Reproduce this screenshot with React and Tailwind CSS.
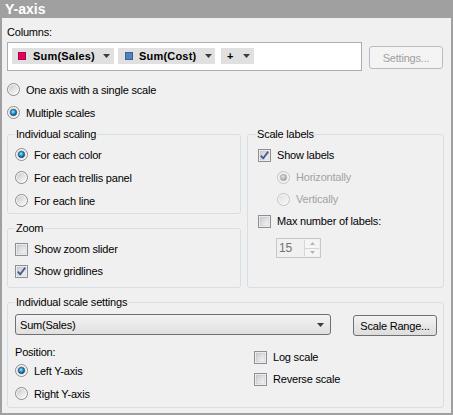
import React from "react";

function Radio({ checked, disabled }) {
  return (
    <svg width="13" height="13" viewBox="0 0 13 13" className="shrink-0">
      <defs>
        <linearGradient id="rIn" x1="0" y1="0" x2="1" y2="1">
          <stop offset="0" stopColor="#c9c9c9" />
          <stop offset="1" stopColor="#fbfbfb" />
        </linearGradient>
        <linearGradient id="rInD" x1="0" y1="0" x2="1" y2="1">
          <stop offset="0" stopColor="#e2e2e2" />
          <stop offset="1" stopColor="#f7f7f7" />
        </linearGradient>
        <radialGradient id="rDot" cx="0.42" cy="0.38" r="0.62">
          <stop offset="0" stopColor="#a8ecff" />
          <stop offset="0.45" stopColor="#2d9fdc" />
          <stop offset="1" stopColor="#0b4a7c" />
        </radialGradient>
        <radialGradient id="rDotD" cx="0.42" cy="0.38" r="0.62">
          <stop offset="0" stopColor="#e6e6e6" />
          <stop offset="1" stopColor="#9a9a9a" />
        </radialGradient>
      </defs>
      <circle cx="6.5" cy="6.5" r="6" fill={disabled ? "#f5f5f5" : "#f8f8f8"} stroke={disabled ? "#c2c2c2" : "#8a8a8a"} />
      <circle cx="6.5" cy="6.5" r="4.6" fill={disabled ? "url(#rInD)" : "url(#rIn)"} />
      {checked && (
        <circle cx="6.5" cy="6.5" r="3.2" fill={disabled ? "url(#rDotD)" : "url(#rDot)"} stroke={disabled ? "#b0b0b0" : "#1d3f5c"} strokeWidth="0.6" />
      )}
    </svg>
  );
}

function Check({ checked }) {
  return (
    <svg width="13" height="13" viewBox="0 0 13 13" className="shrink-0">
      <defs>
        <linearGradient id="cIn" x1="0" y1="0" x2="1" y2="1">
          <stop offset="0" stopColor="#c8cbd0" />
          <stop offset="1" stopColor="#f7f7f7" />
        </linearGradient>
      </defs>
      <rect x="0.5" y="0.5" width="12" height="12" fill="#fbfbfb" stroke="#8e8f8f" />
      <rect x="2" y="2" width="9" height="9" fill="url(#cIn)" stroke="#b5b8bc" strokeWidth="0.5" />
      {checked && (
        <path d="M2.8 6.6 L5.2 9.4 L10.2 2.6" fill="none" stroke="#4a5b96" strokeWidth="1.8" strokeLinejoin="round" />
      )}
    </svg>
  );
}

function Tri() {
  return (
    <svg width="7" height="4" viewBox="0 0 7 4" className="shrink-0">
      <path d="M0 0H7L3.5 4Z" fill="#3c3c3c" />
    </svg>
  );
}

function RadioRow({ label, checked, disabled, h = "h-[23px]" }) {
  return (
    <div className={`flex items-center ${h}`}>
      <Radio checked={checked} disabled={disabled} />
      <span className={`ml-[6px] leading-[14px] ${disabled ? "text-[#a3a3a3]" : ""}`}>{label}</span>
    </div>
  );
}

function CheckRow({ label, checked, h = "h-[22px]" }) {
  return (
    <div className={`flex items-center ${h}`}>
      <Check checked={checked} />
      <span className="ml-[6px] leading-[14px]">{label}</span>
    </div>
  );
}

export default function App() {
  return (
    <div className="w-[453px] h-[415px] bg-[#f0f0f0] flex flex-col font-['Liberation_Sans',Arial,sans-serif] text-[11px] text-black tracking-[-0.2px] overflow-hidden">
      <div className="h-[18px] shrink-0 bg-[#a0a0a0] text-white font-bold text-[14px] leading-[18px] pl-[5px] tracking-normal">
        Y-axis
      </div>
      <div className="flex-1 border-x-2 border-b-2 border-[#a0a0a0] pl-[5px] pr-[7px] flex flex-col">
        <div className="mt-[7px] leading-[14px]">Columns:</div>
        <div className="mt-[3px] flex items-start">
          <div className="w-[355px] h-[29px] bg-white border border-[#abadb3] flex items-start pt-[5px] pl-[4px] gap-[4px]">
            <div className="w-[102px] h-[16px] bg-[#e0e0e0] flex items-center pl-[6px] pr-[4px]">
              <span className="w-[8px] h-[8px] bg-[#e6005c] border border-[#b0004a] shrink-0" />
              <span className="ml-[7px] font-bold tracking-[0.2px] leading-[14px]">Sum(Sales)</span>
              <span className="ml-auto flex"><Tri /></span>
            </div>
            <div className="w-[97px] h-[16px] bg-[#e0e0e0] flex items-center pl-[7px] pr-[3px]">
              <span className="w-[8px] h-[8px] bg-[#4f81bd] border border-[#36628f] shrink-0" />
              <span className="ml-[6px] font-bold tracking-[0.2px] leading-[14px]">Sum(Cost)</span>
              <span className="ml-auto flex"><Tri /></span>
            </div>
            <div className="ml-[2px] w-[33px] h-[16px] bg-[#e0e0e0] flex items-center pl-[6px] pr-[4px]">
              <span className="font-bold leading-[14px]">+</span>
              <span className="ml-auto flex"><Tri /></span>
            </div>
          </div>
          <button className="ml-[7px] mt-[4px] w-[74px] h-[23px] rounded-[3px] border border-[#b9bcbf] bg-[#f4f4f4] text-[#a0a0a0] leading-[14px] flex items-center justify-center">
            Settings...
          </button>
        </div>

        <div className="mt-[7px]">
          <RadioRow label="One axis with a single scale" />
          <RadioRow label="Multiple scales" checked />
        </div>

        <div className="mt-[3px] flex">
          <div className="w-[234px] flex flex-col">
            <fieldset className="border border-[#d5dfe5] rounded-[3px] pl-[7px] pt-[2px] pb-[1px] min-w-0">
              <legend className="px-[1px] leading-[14px]">Individual scaling</legend>
              <RadioRow label="For each color" checked />
              <RadioRow label="For each trellis panel" />
              <RadioRow label="For each line" />
            </fieldset>
            <fieldset className="mt-[7px] flex-1 border border-[#d5dfe5] rounded-[3px] pl-[7px] pt-[3px] min-w-0">
              <legend className="px-[1px] leading-[14px]">Zoom</legend>
              <CheckRow label="Show zoom slider" />
              <CheckRow label="Show gridlines" checked />
            </fieldset>
          </div>
          <fieldset className="ml-[6px] w-[197px] h-[161px] border border-[#d5dfe5] rounded-[3px] pl-[9px] pt-[3px] min-w-0">
            <legend className="px-0 leading-[14px]">Scale labels</legend>
            <div className="ml-[1px]">
              <CheckRow label="Show labels" checked />
              <div className="pl-[19px]">
                <RadioRow label="Horizontally" checked disabled h="h-[22px]" />
                <RadioRow label="Vertically" disabled h="h-[22px]" />
              </div>
              <CheckRow label="Max number of labels:" />
              <div className="mt-[6px] ml-[18px] w-[45px] h-[20px] border border-[#c7c7c7] bg-[#f0f0f0] flex">
                <span className="flex-1 pl-[2px] text-[12px] leading-[18px] text-[#707070]">15</span>
                <div className="w-[15px] flex flex-col border-l border-[#d6d6d6] my-[1px] mr-[1px]">
                  <div className="flex-1 flex items-center justify-center border-b border-[#d6d6d6] bg-[#f5f5f5]">
                    <svg width="5" height="3" viewBox="0 0 5 3"><path d="M0 3H5L2.5 0Z" fill="#b5b5b5" /></svg>
                  </div>
                  <div className="flex-1 flex items-center justify-center bg-[#f5f5f5]">
                    <svg width="5" height="3" viewBox="0 0 5 3"><path d="M0 0H5L2.5 3Z" fill="#b5b5b5" /></svg>
                  </div>
                </div>
              </div>
            </div>
          </fieldset>
        </div>

        <fieldset className="mt-[7px] border border-[#d5dfe5] rounded-[3px] pl-[7px] pr-[6px] pt-[5px] pb-[2px] min-w-0">
          <legend className="px-[1px] leading-[14px]">Individual scale settings</legend>
          <div className="flex items-start">
            <div className="w-[316px] h-[21px] rounded-[3px] border border-[#707070] bg-gradient-to-b from-[#f3f3f3] to-[#e0e0e0] flex items-center pl-[4px] pr-[6px]">
              <span className="leading-[14px]">Sum(Sales)</span>
              <span className="ml-auto flex"><Tri /></span>
            </div>
            <button className="ml-[22px] mt-[1px] w-[84px] h-[21px] rounded-[3px] border border-[#707070] bg-gradient-to-b from-[#f3f3f3] to-[#dddddd] leading-[14px] flex items-center justify-center">
              Scale Range...
            </button>
          </div>
          <div className="flex">
            <div className="w-[239px]">
              <div className="mt-[9px] leading-[14px]">Position:</div>
              <RadioRow label="Left Y-axis" checked />
              <RadioRow label="Right Y-axis" />
            </div>
            <div className="mt-[10px]">
              <CheckRow label="Log scale" />
              <CheckRow label="Reverse scale" />
            </div>
          </div>
        </fieldset>
      </div>
    </div>
  );
}
